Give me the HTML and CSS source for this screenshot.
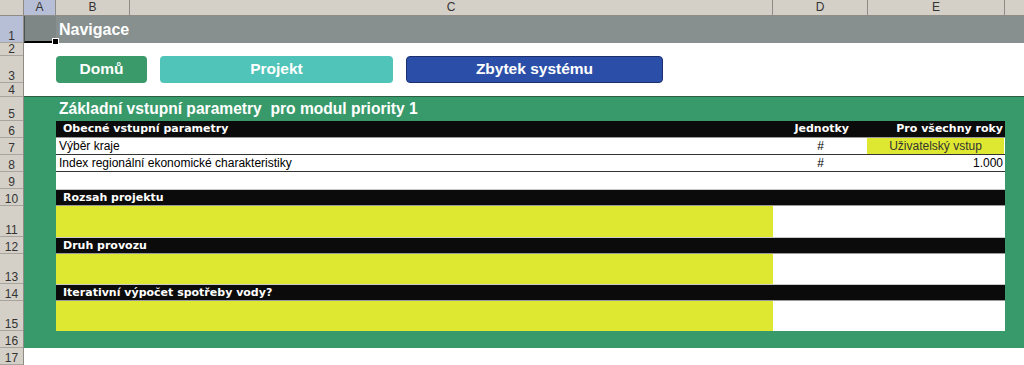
FILE: index.html
```html
<!DOCTYPE html>
<html lang="cs">
<head>
<meta charset="UTF-8" />
<meta name="viewport" content="width=device-width, initial-scale=1" />
<title>Základní vstupní parametry</title>
<link rel="stylesheet" href="styles.css">
</head>
<body>

<div class="col-heads">
  <div class="corner"></div>
  <div class="col-head col-a active">A</div>
  <div class="col-head col-b">B</div>
  <div class="col-head col-c">C</div>
  <div class="col-head col-d">D</div>
  <div class="col-head col-e">E</div>
  <div class="col-head col-f"></div>
</div>

<div class="sheet">
  <div class="row-heads">
    <div class="row-head h27 active">1</div>
    <div class="row-head h13">2</div>
    <div class="row-head h27">3</div>
    <div class="row-head h14">4</div>
    <div class="row-head h24">5</div>
    <div class="row-head h17">6</div>
    <div class="row-head h17">7</div>
    <div class="row-head h17">8</div>
    <div class="row-head h17">9</div>
    <div class="row-head h17">10</div>
    <div class="row-head h31">11</div>
    <div class="row-head h17">12</div>
    <div class="row-head h30">13</div>
    <div class="row-head h17">14</div>
    <div class="row-head h30">15</div>
    <div class="row-head h17">16</div>
    <div class="row-head h17">17</div>
  </div>

  <div class="cells">
    <div class="nav-bar">
      <div class="cell-a1"><span class="handle"></span></div>
      <span class="nav-title">Navigace</span>
    </div>

    <div class="buttons">
      <button class="btn btn-home">Domů</button>
      <button class="btn btn-project">Projekt</button>
      <button class="btn btn-rest">Zbytek systému</button>
    </div>

    <div class="panel">
      <div class="panel-title">Základní vstupní parametry&nbsp; pro modul priority 1</div>

      <div class="tbl">
        <div class="tr head">
          <div class="td name">Obecné vstupní parametry</div>
          <div class="td unit right">Jednotky</div>
          <div class="td val right">Pro všechny roky</div>
        </div>
        <div class="tr line">
          <div class="td name">Výběr kraje</div>
          <div class="td unit center">#</div>
          <div class="td val input">Uživatelský vstup</div>
        </div>
        <div class="tr line">
          <div class="td name">Index regionální ekonomické charakteristiky</div>
          <div class="td unit center">#</div>
          <div class="td val right">1.000</div>
        </div>
        <div class="tr empty"></div>

        <div class="tr head">
          <div class="td name">Rozsah projektu</div>
        </div>
        <div class="tr fill h31">
          <div class="td name"></div>
        </div>

        <div class="tr head">
          <div class="td name">Druh provozu</div>
        </div>
        <div class="tr fill h30">
          <div class="td name"></div>
        </div>

        <div class="tr head">
          <div class="td name">Iterativní výpočet spotřeby vody?</div>
        </div>
        <div class="tr fill h30">
          <div class="td name"></div>
        </div>
      </div>
    </div>

    <div class="blank"></div>
  </div>
</div>

</body>
</html>
```

FILE: styles.css
```css
body {
  margin: 0;
  font-family: 'Liberation Sans', Arial, sans-serif;
  background: #fff;
  color: #000;
  width: 1024px;
  height: 365px;
  overflow: hidden;
}

/* hlavičky sloupců */
.col-heads {
  display: flex;
  height: 16px;
  background: #d4d0c8;
  border-bottom: 1px solid #8e8c86;
  box-sizing: border-box;
}
.corner {
  width: 24px;
  border-right: 1px solid #8e8c86;
  box-sizing: border-box;
}
.col-head {
  box-sizing: border-box;
  border-right: 1px solid #8e8c86;
  font-size: 12px;
  color: #333;
  text-align: center;
  line-height: 15px;
}
.col-head.active {
  background: #b7bfd7;
}
.col-a { width: 32px; }
.col-b { width: 74px; }
.col-c { width: 643px; }
.col-d { width: 95px; }
.col-e { width: 137px; }
.col-f { flex: 1; border-right: none; }

.sheet {
  display: flex;
}

/* hlavičky řádků */
.row-heads {
  width: 24px;
  background: #d4d0c8;
  border-right: 1px solid #8e8c86;
  box-sizing: border-box;
}
.row-head {
  box-sizing: border-box;
  border-bottom: 1px solid #a8a59e;
  font-size: 12px;
  color: #333;
  display: flex;
  align-items: flex-end;
  justify-content: center;
  line-height: 12px;
  overflow: hidden;
}
.row-head.active {
  background: #b7bfd7;
}
.h13 { height: 13px; }
.h14 { height: 14px; }
.h17 { height: 17px; }
.h24 { height: 24px; }
.h27 { height: 27px; }
.h30 { height: 30px; }
.h31 { height: 31px; }

.cells {
  flex: 1;
}

/* řádek 1 */
.nav-bar {
  height: 27px;
  background: #878f8f;
  display: flex;
  align-items: center;
}
.cell-a1 {
  width: 32px;
  height: 27px;
  box-sizing: border-box;
  background: #7e8686;
  border-left: 1px solid #4d5252;
  border-bottom: 2px solid #000;
  position: relative;
}
.handle {
  position: absolute;
  right: -3px;
  bottom: -4px;
  width: 5px;
  height: 5px;
  background: #000;
  border: 1px solid #fff;
}
.nav-title {
  margin-left: 3px;
  color: #fff;
  font-weight: 700;
  font-size: 16px;
}

/* tlačítka */
.buttons {
  height: 54px;
  box-sizing: border-box;
  padding: 13px 0 0 32px;
  display: flex;
  align-items: flex-start;
  gap: 13px;
  border-bottom: 1px solid #2c5e46;
}
.btn {
  height: 27px;
  border: none;
  border-radius: 4px;
  color: #fff;
  font-family: 'Liberation Sans', Arial, sans-serif;
  font-weight: 700;
  font-size: 15.5px;
  padding: 0 0 2px;
  cursor: pointer;
}
.btn-home {
  width: 91px;
  background: #3a9a69;
}
.btn-project {
  width: 233px;
  background: #50c4b9;
}
.btn-rest {
  width: 257px;
  background: #2b4fa8;
  border: 1px solid #1c3070;
}

/* zelený panel */
.panel {
  background: #389a6b;
  height: 251px;
  box-sizing: border-box;
  padding: 0 19px 17px 32px;
}
.panel-title {
  height: 24px;
  line-height: 23px;
  padding-left: 3px;
  color: #fff;
  font-weight: 700;
  font-size: 15.6px;
}

.tbl {
  display: flex;
  flex-direction: column;
}
.tr {
  display: grid;
  grid-template-columns: 717px 95px 137px;
  height: 17px;
  box-sizing: border-box;
  background: #fff;
}
.td {
  font-size: 12px;
  line-height: 16px;
  white-space: nowrap;
  overflow: hidden;
}
.td.name {
  padding-left: 3px;
}
.right { text-align: right; padding-right: 2px; }
.center { text-align: center; }

.tr.head {
  background: #0b0b0b;
  border-top: 1px solid #c9c9c9;
  border-bottom: 1px solid #9a9a9a;
}
.tr.head .td {
  color: #fff;
  font-family: 'DejaVu Sans', Verdana, sans-serif;
  font-weight: 700;
  font-size: 11px;
  line-height: 15px;
}
.tr.head .td.name {
  padding-left: 7px;
}
.tr.head .td.unit {
  padding-right: 19px;
}
.tr.head:first-child {
  border-top: none;
}

.tr.line {
  border-bottom: 1px solid #333;
}
.td.input {
  background: #dfe831;
  color: #333;
  text-align: center;
  margin-left: -1px;
  margin-right: 1px;
}

.tr.fill .td.name {
  background: #dfe831;
}
.tr.h30 { height: 30px; }
.tr.h31 { height: 31px; }

.blank {
  height: 17px;
}
```
